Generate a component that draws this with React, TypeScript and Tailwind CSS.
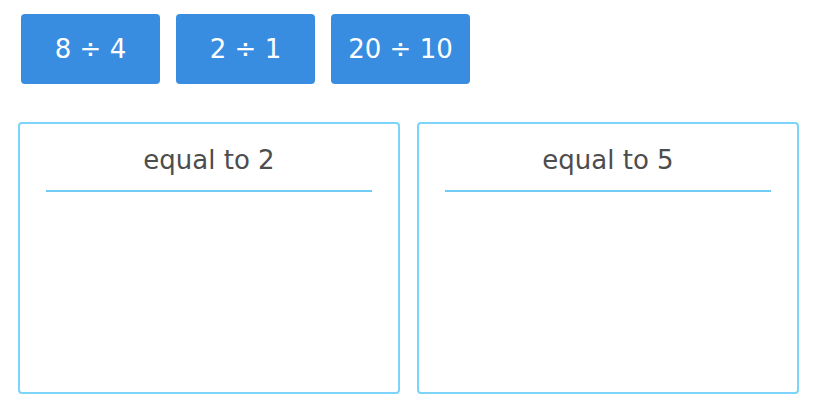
import React from "react";

const buttons = ["8 ÷ 4", "2 ÷ 1", "20 ÷ 10"];
const boxes = ["equal to 2", "equal to 5"];

export default function App() {
  return (
    <div
      className="w-[821px] h-[400px] bg-white overflow-hidden"
      style={{ fontFamily: '"DejaVu Sans", Verdana, sans-serif' }}
    >
      <div className="flex gap-[16px] pl-[21px] pt-[14px]">
        {buttons.map((b) => (
          <div
            key={b}
            className="w-[139px] h-[70px] rounded-[4px] bg-[#388de1] text-white text-[26px] flex items-center justify-center"
          >
            {b}
          </div>
        ))}
      </div>
      <div className="flex gap-[17px] pl-[18px] mt-[38px]">
        {boxes.map((t) => (
          <div
            key={t}
            className="w-[382px] h-[272px] border-2 border-[#7dd4fa] rounded-[4px]"
          >
            <div className="pt-[20px] text-[26px] leading-[32px] text-[#4d4d4d] text-center">
              {t}
            </div>
            <div className="mt-[14px] mx-[26px] h-[2px] bg-[#6fcdf5]" />
          </div>
        ))}
      </div>
    </div>
  );
}
